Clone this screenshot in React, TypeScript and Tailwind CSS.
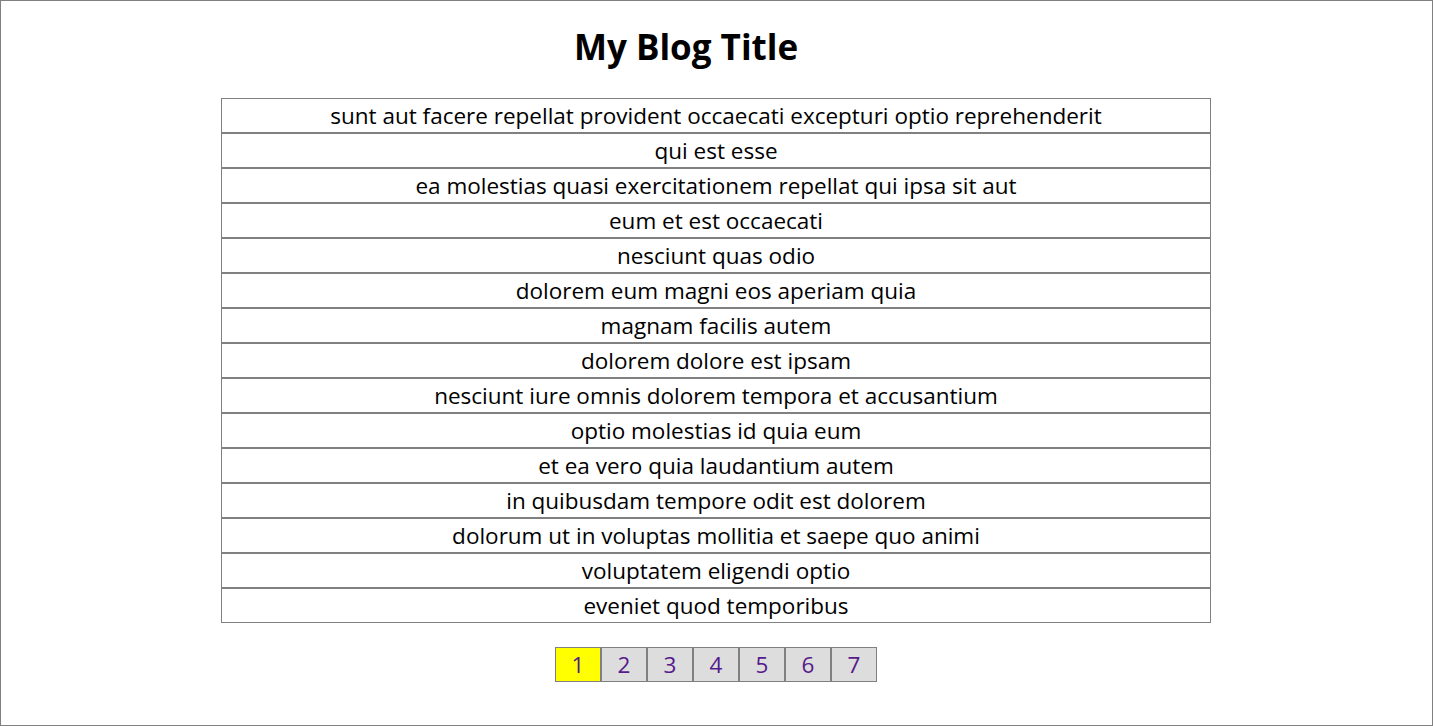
import React from "react"

const posts = [
  "sunt aut facere repellat provident occaecati excepturi optio reprehenderit",
  "qui est esse",
  "ea molestias quasi exercitationem repellat qui ipsa sit aut",
  "eum et est occaecati",
  "nesciunt quas odio",
  "dolorem eum magni eos aperiam quia",
  "magnam facilis autem",
  "dolorem dolore est ipsam",
  "nesciunt iure omnis dolorem tempora et accusantium",
  "optio molestias id quia eum",
  "et ea vero quia laudantium autem",
  "in quibusdam tempore odit est dolorem",
  "dolorum ut in voluptas mollitia et saepe quo animi",
  "voluptatem eligendi optio",
  "eveniet quod temporibus",
]

const pages = [1, 2, 3, 4, 5, 6, 7]

export default function App() {
  return (
    <div
      className="h-[726px] border border-[#808080] pr-px bg-white flex flex-col items-center text-black"
      style={{ fontFamily: '"Open Sans", "Noto Sans", sans-serif' }}
    >
      <h1 className="mt-[25px] mr-[60px] text-[35px] leading-[42px] font-bold">My Blog Title</h1>

      {/* Posts */}
      <div className="mt-[30px] w-[990px] flex flex-col">
        {posts.map((title) => (
          <div
            key={title}
            className="h-[35px] pt-px border border-[#808080] flex items-center justify-center text-[22.5px]"
          >
            {title}
          </div>
        ))}
      </div>

      {/* Pagination */}
      <div className="mt-[24px] flex">
        {pages.map((p) => (
          <a
            key={p}
            href="#"
            className={`w-[46px] h-[35px] border border-[#808080] flex items-center justify-center text-[22.5px] text-[#551a8b] ${
              p === 1 ? "bg-[#ffff00]" : "bg-[#dddddd]"
            }`}
          >
            {p}
          </a>
        ))}
      </div>
    </div>
  )
}
